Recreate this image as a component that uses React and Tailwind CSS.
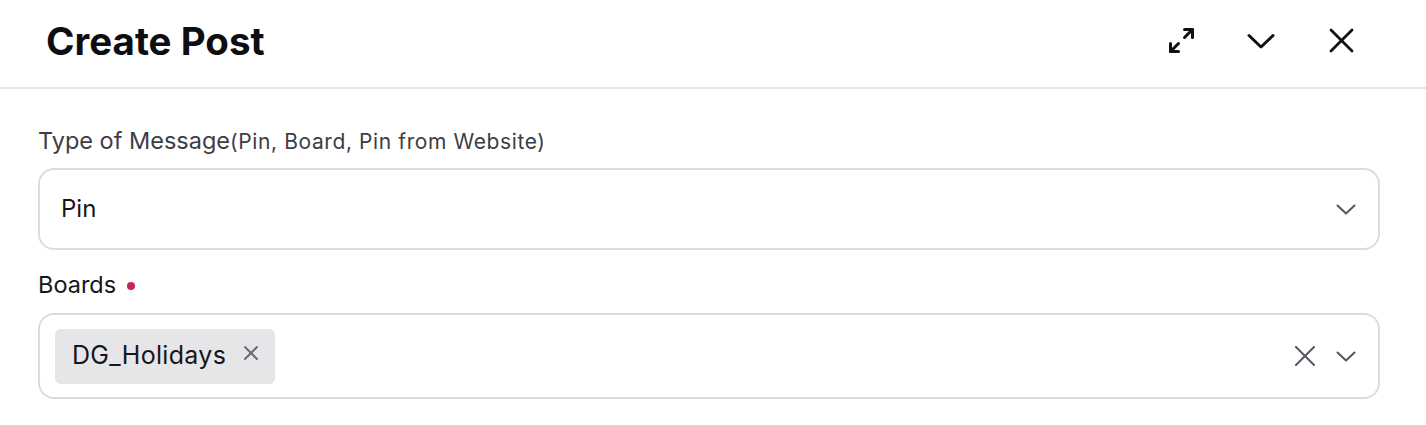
function ExpandIcon() {
  return (
    <svg width="27" height="27" viewBox="0 0 27 27" fill="none" stroke="#111114" strokeWidth="3" strokeLinecap="round" strokeLinejoin="round">
      <path d="M16.5 2.5h8v8" />
      <path d="M24.5 2.5l-8 8" />
      <path d="M2.5 24.5l8-8" />
      <path d="M2.5 16.5v8h8" />
    </svg>
  );
}

function HeaderChevron() {
  return (
    <svg width="28" height="16" viewBox="0 0 28 16" fill="none" stroke="#111114" strokeWidth="3" strokeLinecap="round" strokeLinejoin="round">
      <path d="M2 2.5l12 11.5 12-11.5" />
    </svg>
  );
}

function HeaderClose() {
  return (
    <svg width="25" height="25" viewBox="0 0 25 25" fill="none" stroke="#111114" strokeWidth="2.8" strokeLinecap="round">
      <path d="M2 2l21 21" />
      <path d="M23 2L2 23" />
    </svg>
  );
}

function SmallChevron() {
  return (
    <svg width="20" height="11" viewBox="0 0 20 11" fill="none" stroke="#55555f" strokeWidth="2" strokeLinecap="round" strokeLinejoin="round">
      <path d="M1.5 1.5l8.5 8 8.5-8" />
    </svg>
  );
}

function ClearIcon() {
  return (
    <svg width="20" height="20" viewBox="0 0 20 20" fill="none" stroke="#55555f" strokeWidth="2" strokeLinecap="round">
      <path d="M1 1l18 18" />
      <path d="M19 1L1 19" />
    </svg>
  );
}

function ChipClose() {
  return (
    <svg width="14" height="14" viewBox="0 0 14 14" fill="none" stroke="#6b6b75" strokeWidth="2" strokeLinecap="round">
      <path d="M1 1l12 12" />
      <path d="M13 1L1 13" />
    </svg>
  );
}

export default function App() {
  return (
    <div className="w-[1426px] h-[425px] bg-white text-[#16161a]" style={{ fontFamily: "Inter, 'Noto Sans', sans-serif" }}>
      {/* Header */}
      <div className="flex h-[89px] items-center justify-between border-b-2 border-[#e5e5e7] pl-[46px] pr-[65px]">
        <h1 className="pb-[4px] text-[38.5px] font-bold text-[#0e0e12]">Create Post</h1>
        <div className="flex items-center gap-[40px] pb-[6px]">
          <button className="flex h-[40px] w-[40px] items-center justify-center">
            <ExpandIcon />
          </button>
          <button className="flex h-[40px] w-[40px] items-center justify-center">
            <HeaderChevron />
          </button>
          <button className="flex h-[40px] w-[40px] items-center justify-center">
            <HeaderClose />
          </button>
        </div>
      </div>

      {/* Form */}
      <div className="pl-[38px] pr-[46px] pt-[37px]">
        <label className="block text-[23.5px] leading-[30px] text-[#3d3d45]">
          Type of Message<span className="text-[21px] tracking-[0.6px]">(Pin, Board, Pin from Website)</span>
        </label>
        <div className="mt-[11px] flex h-[82px] items-center justify-between rounded-[16px] border-2 border-[#dcdcde] pl-[21px] pr-[22px]">
          <span className="text-[24px] text-[#16161a]">Pin</span>
          <SmallChevron />
        </div>

        <label className="mt-[20px] flex items-center gap-[11px] text-[23.5px] leading-[30px] text-[#16161a]">
          Boards
          <span className="mt-[2px] h-[8px] w-[8px] rounded-full bg-[#c2255c]" />
        </label>
        <div className="mt-[13px] flex h-[86px] items-center justify-between rounded-[16px] border-2 border-[#dcdcde] pl-[15px] pr-[22px]">
          <div className="flex h-[55px] items-center gap-[18px] rounded-[6px] bg-[#e6e6e9] pl-[17px] pr-[17px]">
            <span className="text-[25px] tracking-[0.3px] text-[#16161a]">DG_Holidays</span>
            <span className="mb-[6px]">
              <ChipClose />
            </span>
          </div>
          <div className="flex items-center gap-[21px]">
            <ClearIcon />
            <SmallChevron />
          </div>
        </div>
      </div>
    </div>
  );
}
